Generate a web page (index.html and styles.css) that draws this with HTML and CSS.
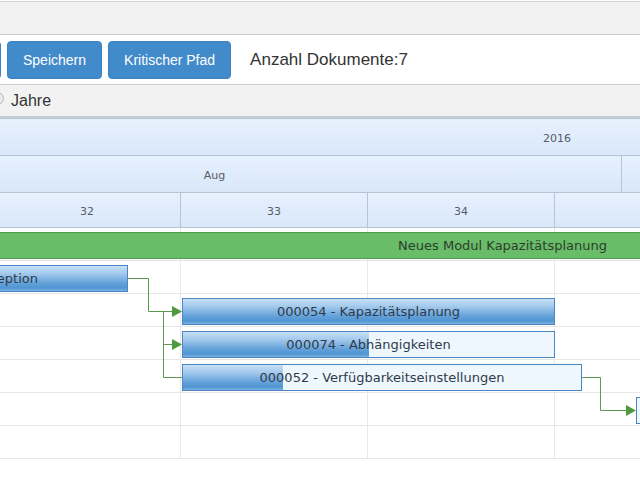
FILE: index.html
```html
<!DOCTYPE html>
<html>
<head>
<meta charset="utf-8">
<link rel="stylesheet" href="styles.css">
</head>
<body>
<div class="topbar"></div>
<div class="toolbar">
  <button class="btn btn-cut" aria-label="Neu"></button>
  <button class="btn">Speichern</button>
  <button class="btn">Kritischer Pfad</button>
  <span class="count">Anzahl Dokumente:7</span>
</div>
<div class="filterbar">
  <span class="radio"></span>
  <span class="radio-label">Jahre</span>
</div>
<div class="gantt">
  <div class="hrow hrow-year">
    <div class="hcell year">2016</div>
  </div>
  <div class="hrow hrow-month">
    <div class="hcell month aug">Aug</div>
    <div class="hcell month"></div>
  </div>
  <div class="hrow hrow-week">
    <div class="hcell week">32</div>
    <div class="hcell week">33</div>
    <div class="hcell week">34</div>
    <div class="hcell week"></div>
  </div>
  <div class="body">
    <div class="row"><div class="summary">Neues Modul Kapazitätsplanung</div></div>
    <div class="row"><div class="bar bar-cut" style="left:-190px;width:318px"><div class="fill" style="width:100%"></div><span class="label">000053 - Konzeption</span></div></div>
    <div class="row"><div class="bar" style="left:182px;width:373px"><div class="fill" style="width:100%"></div><span class="label">000054 - Kapazitätsplanung</span></div></div>
    <div class="row"><div class="bar" style="left:182px;width:373px"><div class="fill" style="width:50%"></div><span class="label">000074 - Abhängigkeiten</span></div></div>
    <div class="row"><div class="bar" style="left:182px;width:400px"><div class="fill" style="width:25%"></div><span class="label">000052 - Verfügbarkeitseinstellungen</span></div></div>
    <div class="row"><div class="bar" style="left:636px;width:200px"><div class="fill" style="width:0%"></div></div></div>
    <div class="row"></div>
    <svg class="links" width="640" height="231" viewBox="0 0 640 231">
      <g fill="none" stroke="#5e9b52" stroke-width="1">
        <path d="M128 50.5 H148.5 V83.5 H173"/>
        <path d="M163.5 83 V149.5 H182"/>
        <path d="M163.5 116.5 H173"/>
        <path d="M582 149.5 H600.5 V182.5 H627"/>
      </g>
      <g fill="#4f9a3f">
        <path d="M172 78 L182 83.5 L172 89 Z"/>
        <path d="M172 111 L182 116.5 L172 122 Z"/>
        <path d="M626 177 L636 182.5 L626 188 Z"/>
      </g>
    </svg>
  </div>
</div>
</body>
</html>
```

FILE: styles.css
```css
* { box-sizing: border-box; }
html, body { margin: 0; padding: 0; background: #fff; overflow: hidden; }
body { width: 640px; height: 480px; font-family: "Liberation Sans", Arial, sans-serif; }

.topbar {
  margin-top: 1px;
  height: 34px;
  background: #f2f2f2;
  border-top: 1px solid #d2d2d2;
  border-bottom: 1px solid #cbcbcb;
}

.toolbar {
  height: 50px;
  background: #fff;
  border-bottom: 1px solid #cfcfcf;
  display: flex;
  align-items: flex-start;
  padding-top: 6px;
  gap: 6px;
  margin-left: -60px;
}
.btn {
  height: 38px;
  padding: 0 15px;
  border: 1px solid #3a82c4;
  border-radius: 4px;
  background: #428bca;
  color: #fff;
  font-family: "Liberation Sans", Arial, sans-serif;
  font-size: 14px;
  line-height: 36px;
  cursor: pointer;
}
.btn-cut { width: 61px; }
.count {
  margin-left: 13px;
  font-size: 17px;
  line-height: 38px;
  color: #333;
}

.filterbar {
  height: 33px;
  background: #f2f2f2;
  border-bottom: 2px solid #c5ccd3;
  display: flex;
  align-items: center;
}
.radio {
  width: 13px;
  height: 13px;
  margin-left: -9px;
  border: 1px solid #b9b9b9;
  border-radius: 50%;
  background: #e9e9e9;
  margin-top: -4px;
}
.radio-label {
  margin-left: 7px;
  font-size: 16px;
  color: #333;
  margin-top: 1px;
}

.gantt {
  border-top: 1px solid #b9c6d5;
  font-family: "DejaVu Sans", Tahoma, sans-serif;
}
.hrow {
  display: flex;
  border-bottom: 1px solid #b7c4d4;
  background: linear-gradient(#e6f1fe, #d9e7fa);
  overflow: hidden;
}
.hrow-year, .hrow-month { height: 37px; }
.hrow-week { height: 35px; }
.hcell {
  flex: none;
  display: flex;
  align-items: center;
  justify-content: center;
  font-size: 11px;
  color: #555d66;
  padding-top: 2px;
}
.year { width: 1114px; }
.hrow-month { margin-left: -192px; }
.month { width: 814px; border-right: 1px solid #b7c4d4; }
.hrow-week { margin-left: -6px; }
.week { width: 187px; border-right: 1px solid #b7c4d4; }

.body {
  position: relative;
  height: 231px;
  background-image: repeating-linear-gradient(90deg, transparent 0 186px, #e9e9e9 186px 187px);
  background-position: -6px 0;
  overflow: hidden;
}
.row {
  position: relative;
  height: 33px;
  border-bottom: 1px solid #e6e6e6;
}
.summary {
  position: absolute;
  top: 4px;
  left: -2px;
  right: -2px;
  height: 27px;
  background: #69bd69;
  border: 1px solid #4d9b4d;
  color: #2e3d2e;
  font-size: 13px;
  line-height: 25px;
  text-align: right;
  padding-right: 34px;
}
.bar {
  position: absolute;
  top: 4px;
  height: 27px;
  background: #eef6fe;
  border: 1px solid #4a87c4;
  overflow: hidden;
}
.fill {
  position: absolute;
  left: 0;
  top: 0;
  bottom: 0;
  background: linear-gradient(#c8e0f5 0%, #a2c9ec 30%, #62a0d9 70%, #5195d3 88%, #7db3e3 100%);
}
.label {
  position: relative;
  display: block;
  text-align: center;
  font-size: 13px;
  line-height: 25px;
  color: #2f3b4a;
  white-space: nowrap;
}
.bar-cut .label { text-align: right; padding-right: 89px; }
.links { position: absolute; left: 0; top: 0; pointer-events: none; }
```
